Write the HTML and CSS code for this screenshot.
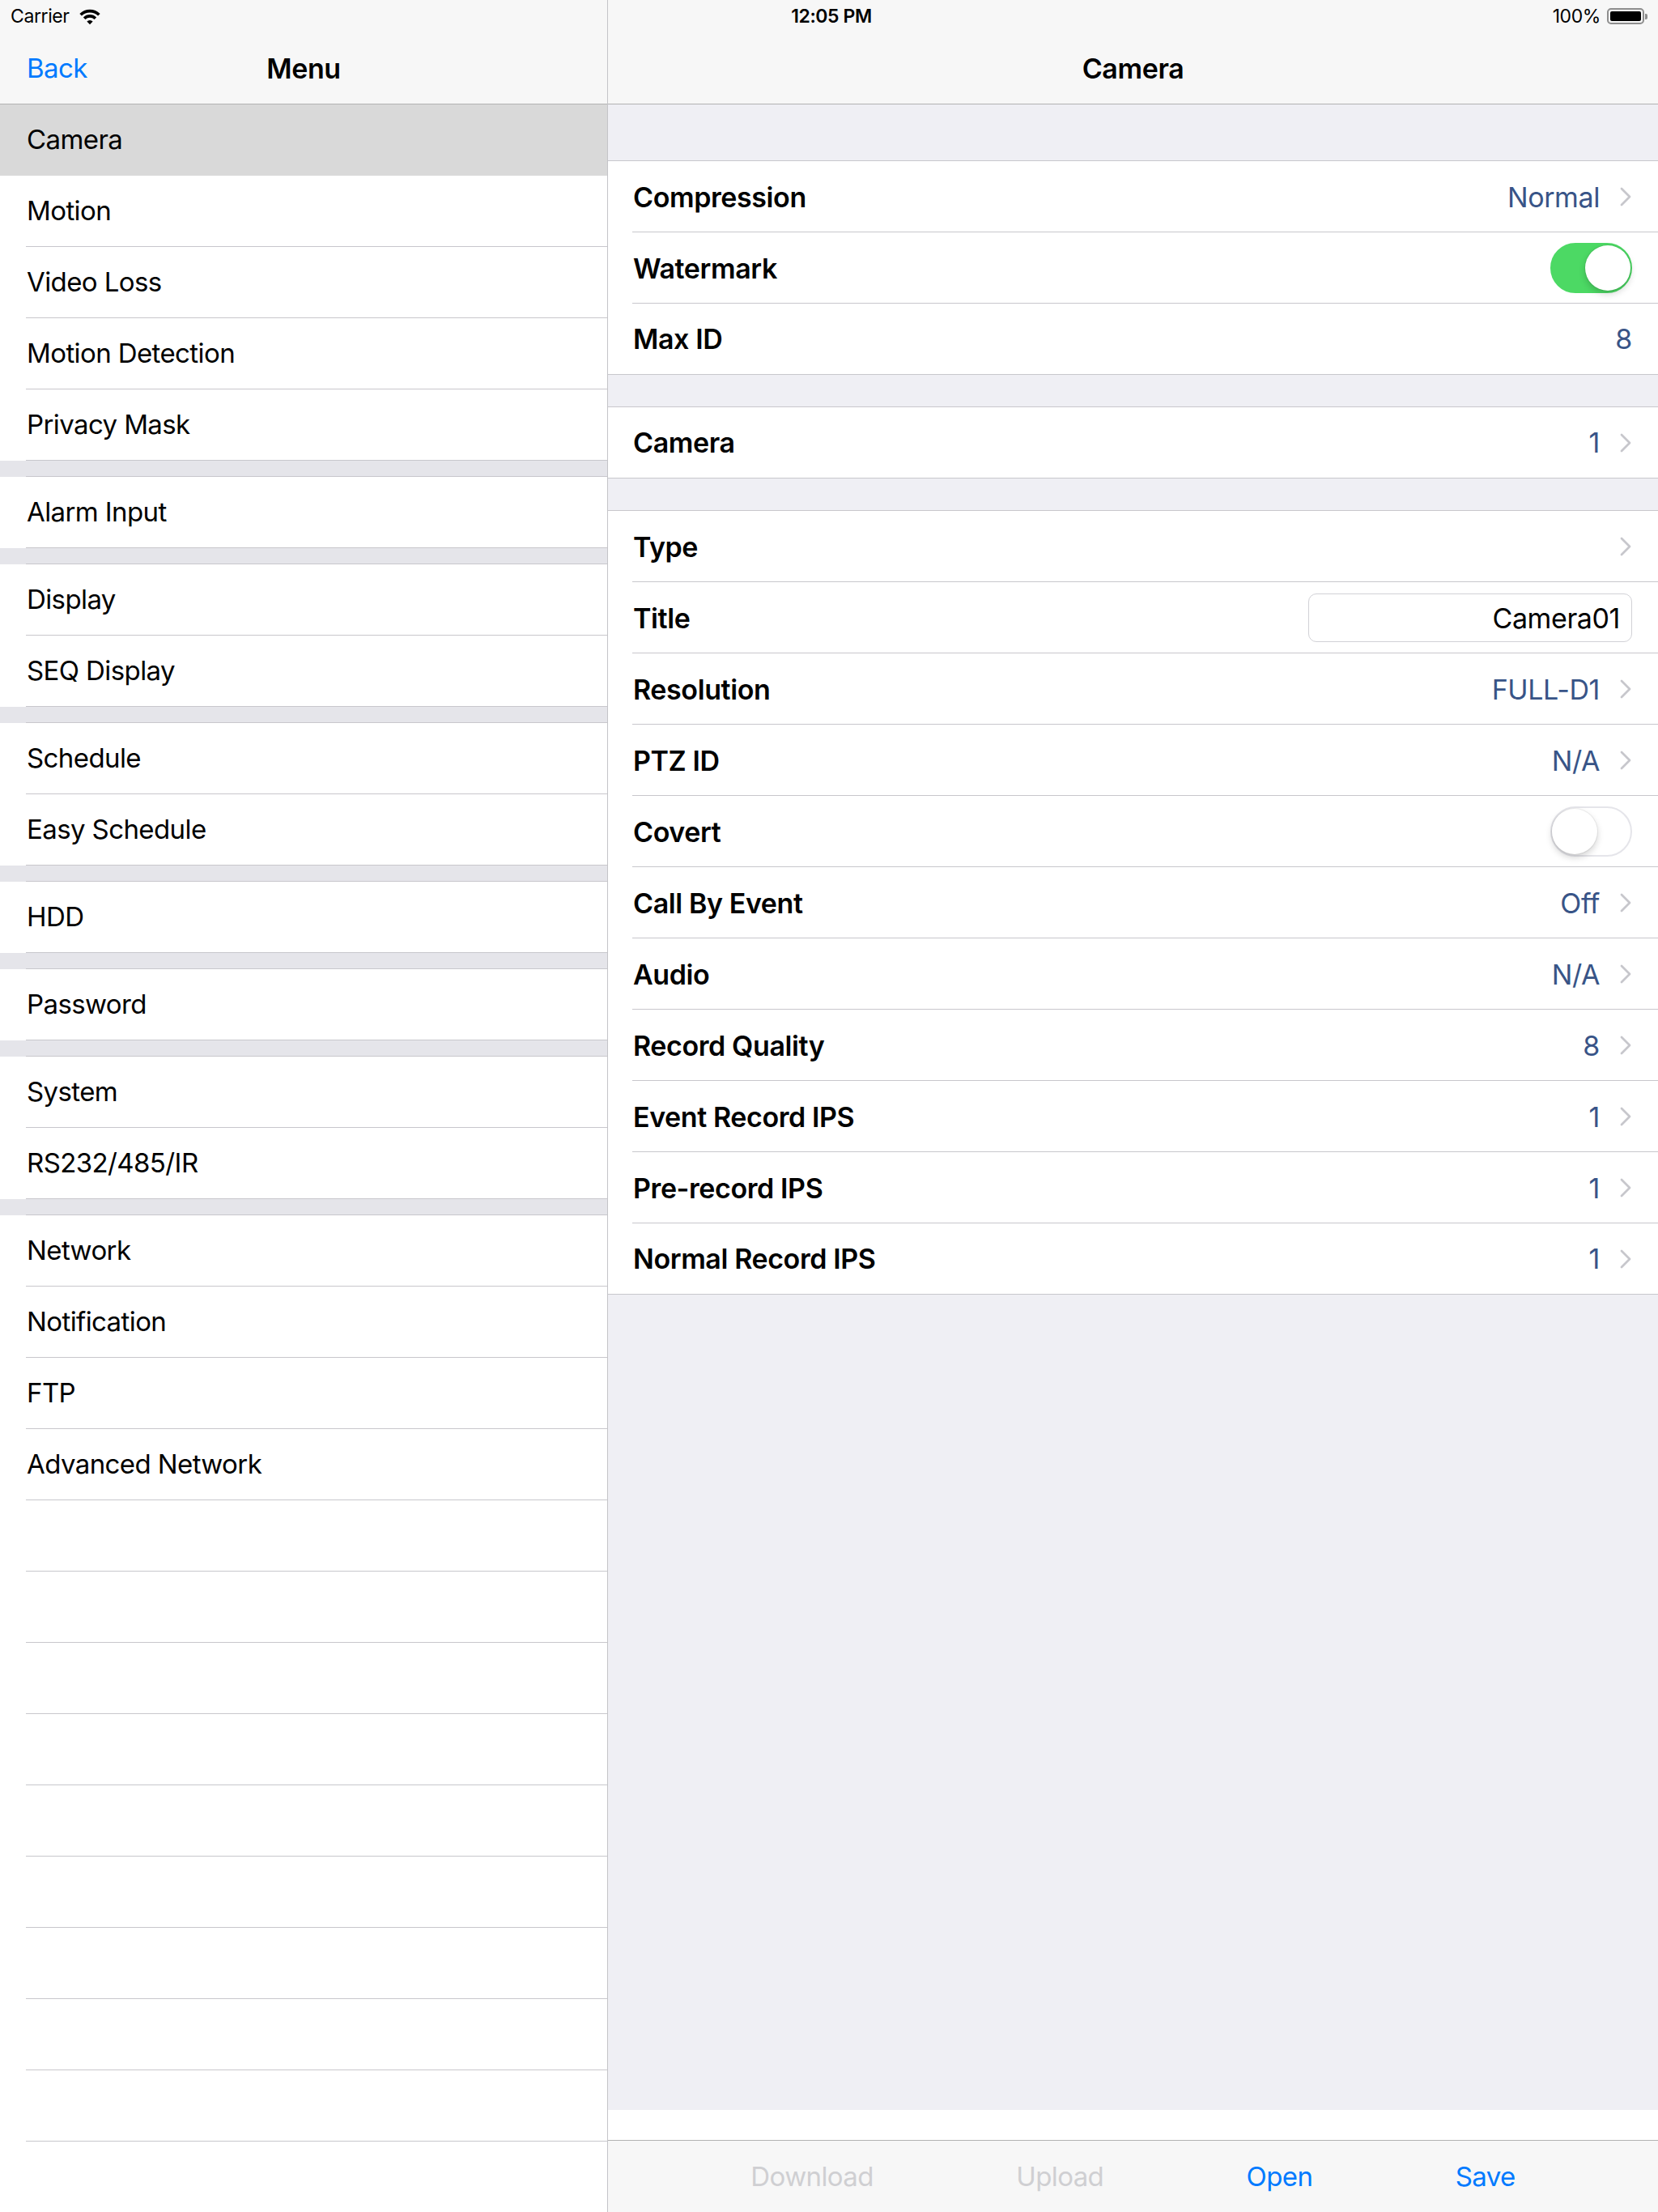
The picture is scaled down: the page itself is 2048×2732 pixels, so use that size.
FILE: index.html
```html
<!DOCTYPE html>
<html lang="en">
  <head>
    <meta charset="UTF-8" />
    <meta name="viewport" content="width=device-width, initial-scale=1.0" />
    <title>Camera Settings</title>
    <link rel="stylesheet" href="styles.css">
  </head>
  <body>
    <div class="statusbar">
      <div class="sb-left">
        Carrier
        <svg class="wifi" width="30" height="22" viewBox="0 0 28 20">
          <path d="M3.4 8.4 A15 15 0 0 1 24.6 8.4" />
          <path d="M7.6 12.6 A9 9 0 0 1 20.4 12.6" />
          <path class="wifi-dot" d="M14 19.5 L10.6 16.1 A4.8 4.8 0 0 1 17.4 16.1 Z" />
        </svg>
      </div>
      <div class="sb-time">12:05 PM</div>
      <div class="sb-right">
        100%
        <span class="battery"><span class="battery-level"></span></span>
        <span class="battery-nub"></span>
      </div>
    </div>

    <div class="split">
      <aside class="master">
        <header class="navbar">
          <span class="nav-back">Back</span>
          <h1 class="nav-title">Menu</h1>
          <span></span>
        </header>
        <ul class="menu">
          <li class="menu-item selected">Camera</li>
          <li class="menu-item">Motion</li>
          <li class="menu-item">Video Loss</li>
          <li class="menu-item">Motion Detection</li>
          <li class="menu-item">Privacy Mask</li>
          <li class="menu-gap"></li>
          <li class="menu-item">Alarm Input</li>
          <li class="menu-gap"></li>
          <li class="menu-item">Display</li>
          <li class="menu-item">SEQ Display</li>
          <li class="menu-gap"></li>
          <li class="menu-item">Schedule</li>
          <li class="menu-item">Easy Schedule</li>
          <li class="menu-gap"></li>
          <li class="menu-item">HDD</li>
          <li class="menu-gap"></li>
          <li class="menu-item">Password</li>
          <li class="menu-gap"></li>
          <li class="menu-item">System</li>
          <li class="menu-item">RS232/485/IR</li>
          <li class="menu-gap"></li>
          <li class="menu-item">Network</li>
          <li class="menu-item">Notification</li>
          <li class="menu-item">FTP</li>
          <li class="menu-item">Advanced Network</li>
          <li class="menu-item"></li>
          <li class="menu-item"></li>
          <li class="menu-item"></li>
          <li class="menu-item"></li>
          <li class="menu-item"></li>
          <li class="menu-item"></li>
          <li class="menu-item"></li>
          <li class="menu-item"></li>
          <li class="menu-item"></li>
          <li class="menu-item"></li>
        </ul>
      </aside>

      <div class="divider"></div>

      <main class="detail">
        <header class="navbar">
          <span></span>
          <h1 class="nav-title">Camera</h1>
          <span></span>
        </header>

        <div class="settings">
          <section class="group">
            <div class="row">
              <span class="label">Compression</span>
              <span class="value">Normal</span>
              <svg class="chevron" width="16" height="24" viewBox="0 0 16 24"><path d="M3 2 L13 12 L3 22" /></svg>
            </div>
            <div class="row">
              <span class="label">Watermark</span>
              <span class="switch on"><span class="knob"></span></span>
            </div>
            <div class="row">
              <span class="label">Max ID</span>
              <span class="value">8</span>
            </div>
          </section>

          <section class="group">
            <div class="row">
              <span class="label">Camera</span>
              <span class="value">1</span>
              <svg class="chevron" width="16" height="24" viewBox="0 0 16 24"><path d="M3 2 L13 12 L3 22" /></svg>
            </div>
          </section>

          <section class="group">
            <div class="row">
              <span class="label">Type</span>
              <span class="value"></span>
              <svg class="chevron" width="16" height="24" viewBox="0 0 16 24"><path d="M3 2 L13 12 L3 22" /></svg>
            </div>
            <div class="row">
              <span class="label">Title</span>
              <input class="text-field" type="text" value="Camera01" />
            </div>
            <div class="row">
              <span class="label">Resolution</span>
              <span class="value">FULL-D1</span>
              <svg class="chevron" width="16" height="24" viewBox="0 0 16 24"><path d="M3 2 L13 12 L3 22" /></svg>
            </div>
            <div class="row">
              <span class="label">PTZ ID</span>
              <span class="value">N/A</span>
              <svg class="chevron" width="16" height="24" viewBox="0 0 16 24"><path d="M3 2 L13 12 L3 22" /></svg>
            </div>
            <div class="row">
              <span class="label">Covert</span>
              <span class="switch"><span class="knob"></span></span>
            </div>
            <div class="row">
              <span class="label">Call By Event</span>
              <span class="value">Off</span>
              <svg class="chevron" width="16" height="24" viewBox="0 0 16 24"><path d="M3 2 L13 12 L3 22" /></svg>
            </div>
            <div class="row">
              <span class="label">Audio</span>
              <span class="value">N/A</span>
              <svg class="chevron" width="16" height="24" viewBox="0 0 16 24"><path d="M3 2 L13 12 L3 22" /></svg>
            </div>
            <div class="row">
              <span class="label">Record Quality</span>
              <span class="value">8</span>
              <svg class="chevron" width="16" height="24" viewBox="0 0 16 24"><path d="M3 2 L13 12 L3 22" /></svg>
            </div>
            <div class="row">
              <span class="label">Event Record IPS</span>
              <span class="value">1</span>
              <svg class="chevron" width="16" height="24" viewBox="0 0 16 24"><path d="M3 2 L13 12 L3 22" /></svg>
            </div>
            <div class="row">
              <span class="label">Pre-record IPS</span>
              <span class="value">1</span>
              <svg class="chevron" width="16" height="24" viewBox="0 0 16 24"><path d="M3 2 L13 12 L3 22" /></svg>
            </div>
            <div class="row">
              <span class="label">Normal Record IPS</span>
              <span class="value">1</span>
              <svg class="chevron" width="16" height="24" viewBox="0 0 16 24"><path d="M3 2 L13 12 L3 22" /></svg>
            </div>
          </section>
        </div>

        <div class="footer-strip"></div>

        <nav class="toolbar">
          <span class="tool disabled">Download</span>
          <span class="tool disabled">Upload</span>
          <span class="tool">Open</span>
          <span class="tool">Save</span>
        </nav>
      </main>
    </div>
  </body>
</html>
```

FILE: styles.css
```css
body {
  margin: 0;
  width: 2048px;
  height: 2732px;
  overflow: hidden;
  font-family: Inter, Roboto, "Liberation Sans", sans-serif;
  letter-spacing: -0.4px;
  color: #000;
  background-color: #fff;
}

/* status bar sits over both nav bars */
.statusbar {
  position: absolute;
  top: 0;
  left: 0;
  right: 0;
  height: 40px;
  display: grid;
  grid-template-columns: 1fr auto 1fr;
  align-items: center;
  font-size: 23px;
  padding: 0 13px;
  z-index: 2;
}

.sb-left {
  display: flex;
  align-items: center;
  gap: 10px;
}

.wifi path {
  fill: none;
  stroke: #000;
  stroke-width: 3.4;
}

.wifi .wifi-dot {
  fill: #000;
  stroke: none;
}

.sb-time {
  font-weight: 600;
  margin-left: 6px;
}

.sb-right {
  display: flex;
  align-items: center;
  justify-content: flex-end;
}

.battery {
  margin-left: 8px;
  width: 46px;
  height: 20px;
  box-sizing: border-box;
  border: 2px solid #8e8e8e;
  border-radius: 5px;
  padding: 2px;
  display: flex;
}

.battery-level {
  flex: 1;
  background-color: #000;
  border-radius: 2px;
}

.battery-nub {
  width: 3px;
  height: 7px;
  margin-left: 1px;
  background-color: #8e8e8e;
  border-radius: 0 2px 2px 0;
}

.split {
  display: grid;
  grid-template-columns: 750px 1px 1fr;
  height: 2732px;
}

.divider {
  background-color: #c4c4c8;
}

.master,
.detail {
  overflow: hidden;
}

.navbar {
  height: 129px;
  box-sizing: border-box;
  padding: 40px 33px 0 33px;
  background-color: #f7f7f7;
  border-bottom: 1px solid #b2b2b2;
  display: grid;
  grid-template-columns: 1fr auto 1fr;
  align-items: center;
}

.nav-back {
  color: #007aff;
  font-size: 33px;
  letter-spacing: -0.6px;
}

.nav-title {
  margin: 0;
  font-size: 34px;
  font-weight: 600;
}

/* left menu */
.menu {
  list-style: none;
  margin: 0;
  padding: 0;
}

.menu-item {
  height: 88px;
  box-sizing: border-box;
  padding: 0 0 2px 33px;
  display: flex;
  align-items: center;
  font-size: 33px;
  letter-spacing: -0.6px;
  background-image: linear-gradient(#c8c7cc, #c8c7cc);
  background-repeat: no-repeat;
  background-position: 32px 100%;
  background-size: calc(100% - 32px) 1px;
}

.menu-item.selected {
  background-color: #d9d9d9;
  background-image: none;
}

.menu-gap {
  height: 20px;
  background-color: #e5e5ea;
  background-image: linear-gradient(#c8c7cc, #c8c7cc);
  background-repeat: no-repeat;
  background-position: 32px 100%;
  background-size: calc(100% - 32px) 1px;
}

/* right settings */
.detail {
  display: flex;
  flex-direction: column;
}

.settings {
  flex: 1;
  background-color: #efeff4;
  padding-top: 69px;
}

.group {
  background-color: #fff;
  border-top: 1px solid #c8c7cc;
  margin-bottom: 39px;
}

.row {
  height: 88px;
  box-sizing: border-box;
  padding: 0 32px 0 31px;
  display: flex;
  align-items: center;
  background-image: linear-gradient(#c8c7cc, #c8c7cc);
  background-repeat: no-repeat;
  background-position: 30px 100%;
  background-size: calc(100% - 30px) 1px;
}

.row:last-child {
  background-image: none;
  border-bottom: 1px solid #c8c7cc;
}

.label {
  flex: 1;
  font-size: 34px;
  font-weight: 600;
}

.value {
  font-size: 34px;
  color: #385487;
}

.chevron {
  margin-left: 24px;
}

.chevron path {
  fill: none;
  stroke: #c7c7cc;
  stroke-width: 2.8;
  stroke-linecap: round;
  stroke-linejoin: round;
}

.switch {
  width: 101px;
  height: 62px;
  box-sizing: border-box;
  border-radius: 31px;
  border: 2px solid #e5e5ea;
  background-color: #fff;
  display: flex;
  align-items: center;
  justify-content: flex-start;
}

.switch.on {
  background-color: #4cd964;
  border-color: #4cd964;
  justify-content: flex-end;
}

.knob {
  width: 56px;
  height: 56px;
  border-radius: 50%;
  background-color: #fff;
  box-shadow: 0 4px 8px rgba(0, 0, 0, 0.18), 0 0 0 1px rgba(0, 0, 0, 0.06);
}

.text-field {
  width: 400px;
  height: 60px;
  box-sizing: border-box;
  border: 1px solid #d1d1d6;
  border-radius: 10px;
  padding: 0 14px 0 10px;
  font-family: inherit;
  font-size: 34px;
  letter-spacing: -0.4px;
  text-align: right;
  color: #000;
  background-color: #fff;
}

.footer-strip {
  height: 37px;
  background-color: #fff;
}

.toolbar {
  height: 89px;
  box-sizing: border-box;
  border-top: 1px solid #b2b2b2;
  background-color: #f7f7f7;
  display: flex;
  align-items: center;
  justify-content: space-evenly;
}

.tool {
  font-size: 33px;
  letter-spacing: -0.6px;
  color: #007aff;
}

.tool.disabled {
  color: #cfcfd2;
}
```
